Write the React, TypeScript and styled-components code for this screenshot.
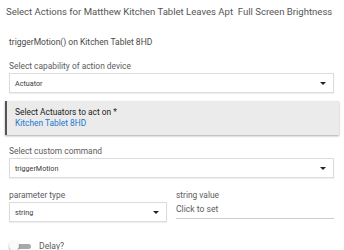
import React from 'react';
import styled, { createGlobalStyle } from 'styled-components';

const GlobalStyle = createGlobalStyle`
  body {
    margin: 0;
    background: #fff;
    font-family: Roboto, 'Liberation Sans', sans-serif;
    color: #555;
  }
`;

const Page = styled.div`
  width: 344px;
  height: 250px;
  overflow: hidden;
  padding: 6px 10px 0 9px;
  box-sizing: border-box;
`;

const Title = styled.div`
  margin-left: -3px;
  font-size: 9.55px;
  line-height: 12px;
  color: #555;
  white-space: nowrap;
`;

const Subtitle = styled.div`
  margin-top: 18px;
  font-size: 8.5px;
  line-height: 12px;
  color: #4a4a4a;
`;

const Field = styled.div<{ $top: number }>`
  margin-top: ${(p) => p.$top}px;
`;

const Label = styled.div`
  font-size: 8.4px;
  line-height: 11px;
  color: #5c5c5c;
  margin-bottom: 1px;
`;

const SelectBox = styled.div`
  position: relative;
  height: 18px;
  border: 1px solid #dcdcdc;
  box-shadow: 0 1px 1px rgba(0, 0, 0, 0.06);
  display: flex;
  align-items: center;
  padding-left: 5px;
  font-size: 7.2px;
  color: #3a3a3a;
  &::after {
    content: '';
    position: absolute;
    right: 7px;
    top: 8px;
    border-left: 3px solid transparent;
    border-right: 3px solid transparent;
    border-top: 3.5px solid #222;
  }
`;

const Card = styled.div`
  margin: 8px -5px 0 -4px;
  height: 34px;
  box-sizing: border-box;
  background: #ebebeb;
  border-left: 2px solid #555;
  box-shadow: 0 1px 2px rgba(0, 0, 0, 0.35);
  padding: 6px 0 0 8px;
`;

const CardTitle = styled.div`
  font-size: 8.4px;
  line-height: 10px;
  color: #222;
`;

const CardLink = styled.div`
  font-size: 8.4px;
  line-height: 12px;
  color: #2379cf;
`;

const Columns = styled.div`
  display: grid;
  grid-template-columns: 158px 158px;
  column-gap: 9px;
  margin-top: 12px;
`;

const TextInput = styled.div`
  height: 16px;
  border-bottom: 1px solid #ccc;
  font-size: 8.6px;
  line-height: 14px;
  color: #5c5c5c;
`;

const ToggleRow = styled.div`
  display: flex;
  align-items: center;
  gap: 6px;
  margin-top: 19px;
`;

const Toggle = styled.div`
  position: relative;
  width: 24px;
  height: 10px;
  &::before {
    content: '';
    position: absolute;
    left: 4px;
    top: 2.5px;
    width: 18px;
    height: 5px;
    border-radius: 3px;
    background: #a9a9a9;
  }
  &::after {
    content: '';
    position: absolute;
    left: 0;
    top: 0;
    width: 10px;
    height: 10px;
    border-radius: 50%;
    background: #fafafa;
    box-shadow: 0 1px 2px rgba(0, 0, 0, 0.4);
  }
`;

const ToggleLabel = styled.span`
  font-size: 8.6px;
  color: #5c5c5c;
`;

export default function App() {
  return (
    <>
      <GlobalStyle />
      <Page>
        <Title>Select Actions for Matthew Kitchen Tablet Leaves Apt&nbsp; Full Screen Brightness</Title>
        <Subtitle>triggerMotion() on Kitchen Tablet 8HD</Subtitle>

        <Field $top={13}>
          <Label>Select capability of action device</Label>
          <SelectBox>Actuator</SelectBox>
        </Field>

        <Card>
          <CardTitle>Select Actuators to act on *</CardTitle>
          <CardLink>Kitchen Tablet 8HD</CardLink>
        </Card>

        <Field $top={11}>
          <Label>Select custom command</Label>
          <SelectBox>triggerMotion</SelectBox>
        </Field>

        <Columns>
          <div>
            <Label>parameter type</Label>
            <SelectBox>string</SelectBox>
          </div>
          <div>
            <Label>string value</Label>
            <TextInput>Click to set</TextInput>
          </div>
        </Columns>

        <ToggleRow>
          <Toggle />
          <ToggleLabel>Delay?</ToggleLabel>
        </ToggleRow>
      </Page>
    </>
  );
}
